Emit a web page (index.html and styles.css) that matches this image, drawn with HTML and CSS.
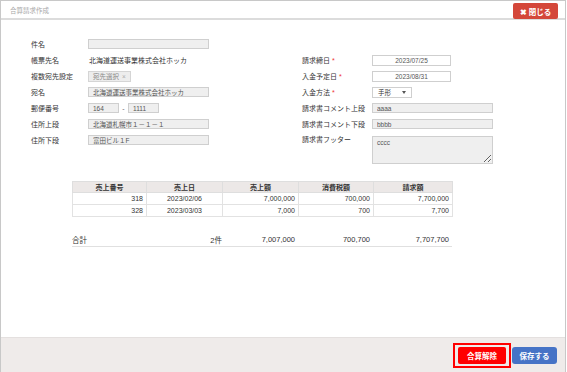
FILE: index.html
```html
<!DOCTYPE html>
<html lang="ja">
<head>
    <meta charset="UTF-8">
    <meta name="viewport" content="width=device-width, initial-scale=1.0">
    <title>合算請求作成</title>
    <link rel="stylesheet" href="styles.css">
</head>
<body>
<div class="modal">
    <div class="modal-header">
        <span class="modal-title">合算請求作成</span>
        <button class="btn-close">✖ 閉じる</button>
    </div>

    <div class="modal-body">
        <div class="form">
            <div class="col col-left">
                <div class="row"><label>件名</label><input class="field" type="text" value="" readonly></div>
                <div class="row"><label>帳票先名</label><span class="plain">北海道運送事業株式会社ホッカ</span></div>
                <div class="row"><label>複数宛先設定</label><span class="tag">宛先選択 <span class="tag-x">×</span></span></div>
                <div class="row"><label>宛名</label><input class="field" type="text" value="北海道運送事業株式会社ホッカ" readonly></div>
                <div class="row">
                    <label>郵便番号</label>
                    <input class="field short" type="text" value="164" readonly>
                    <span class="dash">-</span>
                    <input class="field short" type="text" value="1111" readonly>
                </div>
                <div class="row"><label>住所上段</label><input class="field" type="text" value="北海道札幌市１－１－１" readonly></div>
                <div class="row"><label>住所下段</label><input class="field" type="text" value="富田ビル１F" readonly></div>
            </div>

            <div class="col col-right">
                <div class="row"><label>請求締日<span class="req">*</span></label><input class="field date" type="text" value="2023/07/25"></div>
                <div class="row"><label>入金予定日<span class="req">*</span></label><input class="field date" type="text" value="2023/08/31"></div>
                <div class="row"><label>入金方法<span class="req">*</span></label><div class="select">手形<span class="caret"></span></div></div>
                <div class="row"><label>請求書コメント上段</label><input class="field" type="text" value="aaaa" readonly></div>
                <div class="row"><label>請求書コメント下段</label><input class="field" type="text" value="bbbb" readonly></div>
                <div class="row row-top"><label>請求書フッター</label><textarea class="field area" readonly>cccc</textarea></div>
            </div>
        </div>

        <table class="sales">
            <colgroup>
                <col style="width:74px"><col style="width:76px"><col style="width:76px"><col style="width:75px"><col style="width:79px">
            </colgroup>
            <thead>
                <tr><th>売上番号</th><th>売上日</th><th>売上額</th><th>消費税額</th><th>請求額</th></tr>
            </thead>
            <tbody>
                <tr><td>318</td><td>2023/02/06</td><td>7,000,000</td><td>700,000</td><td>7,700,000</td></tr>
                <tr><td>328</td><td>2023/03/03</td><td>7,000</td><td>700</td><td>7,700</td></tr>
            </tbody>
        </table>

        <table class="total">
            <colgroup>
                <col style="width:74px"><col style="width:76px"><col style="width:76px"><col style="width:75px"><col style="width:79px">
            </colgroup>
            <tr><td class="left">合計</td><td class="count">2件</td><td>7,007,000</td><td>700,700</td><td>7,707,700</td></tr>
        </table>
    </div>

    <div class="modal-footer">
        <div class="highlight"><button class="btn btn-red">合算解除</button></div>
        <button class="btn btn-blue">保存する</button>
    </div>
</div>
</body>
</html>
```

FILE: styles.css
```css
* {
    box-sizing: border-box;
}

body {
    margin: 0;
    font-family: "Liberation Sans", "Noto Sans CJK JP", sans-serif;
    font-size: 7px;
    color: #333;
    background: #fff;
}

.modal {
    width: 566px;
    height: 372px;
    border: 1px solid #c8c8c8;
    border-bottom: none;
    display: flex;
    flex-direction: column;
}

/* header */
.modal-header {
    height: 19px;
    border-bottom: 2px solid #dcdcdc;
    display: flex;
    justify-content: space-between;
    align-items: flex-start;
    padding: 0 7px 0 9px;
}

.modal-title {
    color: #a8a8a8;
    font-size: 6.5px;
    line-height: 19px;
}

.btn-close {
    margin-top: 2px;
    width: 45px;
    height: 16px;
    padding: 0;
    border: none;
    border-radius: 2px;
    background: #d4473a;
    color: #fff;
    font-family: inherit;
    font-size: 7.5px;
    font-weight: bold;
}

/* form */
.modal-body {
    flex: 1;
    padding: 16px 0 0 30px;
}

.form {
    display: flex;
}

.col-left {
    width: 271px;
}

.col-right {
    padding-top: 16px;
}

.row {
    display: flex;
    align-items: center;
    height: 16px;
}

.row label {
    flex: none;
    width: 57px;
}

.col-right .row label {
    width: 70px;
}

.req {
    color: #e33;
    margin-left: 2px;
}

.plain {
    padding-left: 1px;
}

.field {
    width: 121px;
    height: 10px;
    margin: 0;
    padding: 0 4px;
    border: 1px solid #cfcfcf;
    background: #efefef;
    color: #555;
    font-family: inherit;
    font-size: 6.5px;
    outline: none;
}

.field.short {
    width: 31px;
}

.dash {
    width: 9px;
    text-align: center;
    color: #666;
}

.field.date {
    width: 79px;
    height: 11px;
    background: #fff;
    text-align: center;
}

.tag {
    display: inline-flex;
    align-items: center;
    height: 11px;
    padding: 0 4px;
    border: 1px solid #d5d5d5;
    background: #ededed;
    color: #888;
    font-size: 6.5px;
}

.tag-x {
    margin-left: 3px;
    color: #aaa;
}

.select {
    position: relative;
    width: 40px;
    height: 11px;
    padding-left: 5px;
    border: 1px solid #cfcfcf;
    background: #fff;
    font-size: 6.5px;
    line-height: 9px;
}

.caret {
    position: absolute;
    right: 5px;
    top: 3px;
    border-left: 2px solid transparent;
    border-right: 2px solid transparent;
    border-top: 3px solid #555;
}

.row-top {
    align-items: flex-start;
    height: auto;
}

.row-top label {
    line-height: 16px;
}

.field.area {
    height: 28px;
    margin-top: 4px;
    padding: 2px 4px;
    resize: both;
}

/* tables */
.sales,
.total {
    width: 380px;
    margin-left: 41px;
    border-collapse: collapse;
    table-layout: fixed;
}

.sales {
    margin-top: 17px;
}

.sales th {
    height: 11px;
    padding: 0;
    border: 1px solid #dedede;
    background: #ece8e7;
    font-weight: bold;
    text-align: center;
}

.sales td {
    height: 12px;
    padding: 0 3px;
    border: 1px solid #e2e2e2;
    text-align: right;
}

.sales td:nth-child(2) {
    text-align: center;
}

.total {
    margin-top: 16px;
}

.total td {
    height: 13px;
    padding: 0 3px 0 0;
    border-bottom: 1px solid #e0e0e0;
    text-align: right;
    font-size: 7.5px;
}

.total td.left {
    text-align: left;
}

.total td.count {
    padding-right: 0;
}

/* footer */
.modal-footer {
    height: 35px;
    border-top: 1px solid #e4e0df;
    background: #efebea;
    display: flex;
    justify-content: flex-end;
    align-items: center;
    gap: 1px;
    padding-right: 8px;
}

.highlight {
    padding: 2px 3px;
    border: 2px solid #f00;
}

.btn {
    display: block;
    height: 17px;
    padding: 0;
    border: none;
    color: #fff;
    font-family: inherit;
    font-size: 7.5px;
    font-weight: bold;
}

.btn-red {
    width: 48px;
    border-radius: 2px;
    background: #f00;
}

.btn-blue {
    width: 45px;
    border-radius: 3px;
    background: #4673c6;
}
```
